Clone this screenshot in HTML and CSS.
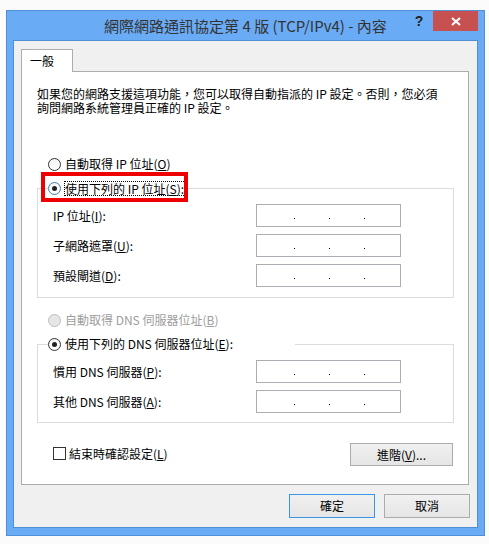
FILE: index.html
```html
<!DOCTYPE html>
<html lang="zh-Hant">
<head>
<meta charset="utf-8">
<title>網際網路通訊協定第 4 版 (TCP/IPv4) - 內容</title>
<link rel="stylesheet" href="styles.css">
</head>
<body>
<div class="window">
  <div class="titlebar">
    <div class="tb-side"></div>
    <div class="title">網際網路通訊協定第 4 版 (TCP/IPv4) - 內容</div>
    <div class="tb-side tb-btns">
      <div class="help">?</div>
      <div class="close"><svg width="10" height="9" viewBox="0 0 10 9"><path d="M1 1 L9 8 M9 1 L1 8" stroke="#fff" stroke-width="2" fill="none"/></svg></div>
    </div>
  </div>
  <div class="client">
    <div class="tabs"><div class="tab">一般</div></div>
    <div class="panel">
      <p class="desc">如果您的網路支援這項功能，您可以取得自動指派的 IP 設定。否則，您必須<br>詢問網路系統管理員正確的 IP 設定。</p>

      <div class="radio row-radio"><span class="circle"></span><span class="rtext">自動取得 IP 位址(<u>O</u>)</span></div>

      <div class="group">
        <div class="ghead">
          <span class="gcorner"></span>
          <div class="radio checked focused glabel-ip"><span class="circle"></span><span class="rtext focus">使用下列的 IP 位址(<u>S</u>):</span></div>
          <span class="gline"></span>
        </div>
        <div class="gbody">
          <span class="flabel">IP 位址(<u>I</u>):</span><span class="ipbox"><i></i><i></i><i></i></span>
          <span class="flabel">子網路遮罩(<u>U</u>):</span><span class="ipbox"><i></i><i></i><i></i></span>
          <span class="flabel">預設閘道(<u>D</u>):</span><span class="ipbox"><i></i><i></i><i></i></span>
        </div>
      </div>

      <div class="radio row-radio disabled row-dns-auto"><span class="circle"></span><span class="rtext">自動取得 DNS 伺服器位址(<u>B</u>)</span></div>

      <div class="group group-dns">
        <div class="ghead">
          <span class="gcorner"></span>
          <div class="radio checked glabel-dns"><span class="circle"></span><span class="rtext">使用下列的 DNS 伺服器位址(<u>E</u>):</span></div>
          <span class="gline"></span>
        </div>
        <div class="gbody">
          <span class="flabel">慣用 DNS 伺服器(<u>P</u>):</span><span class="ipbox"><i></i><i></i><i></i></span>
          <span class="flabel">其他 DNS 伺服器(<u>A</u>):</span><span class="ipbox"><i></i><i></i><i></i></span>
        </div>
      </div>

      <div class="footer">
        <div class="check"><span class="box"></span><span class="ctext">結束時確認設定(<u>L</u>)</span></div>
        <button class="btn btn-adv">進階(<u>V</u>)...</button>
      </div>
    </div>
    <div class="dlg-btns">
      <button class="btn btn-dlg default">確定</button>
      <button class="btn btn-dlg">取消</button>
    </div>
  </div>
</div>
</body>
</html>
```
FILE: styles.css
```css
* { box-sizing: border-box; }

html, body {
  margin: 0;
  padding: 0;
  background: #fbfbfb;
}

body {
  font-family: "Noto Sans CJK TC", "Noto Sans", sans-serif;
  font-size: 12px;
  color: #000;
  padding: 10px 0 0 6px;
}

.window {
  width: 479px;
  height: 526px;
  border: 1px solid #4f8fd6;
  background: #6aabf5;
  padding: 0 6px 7px 6px;
  display: flex;
  flex-direction: column;
}

/* title bar */
.titlebar {
  height: 29px;
  display: grid;
  grid-template-columns: 1fr auto 1fr;
  align-items: center;
}

.title {
  font-size: 15px;
  line-height: 20px;
  color: #333;
  white-space: nowrap;
}

.tb-btns {
  align-self: start;
  display: flex;
  justify-content: flex-end;
}

.help {
  width: 28px;
  height: 20px;
  text-align: center;
  font-family: "Liberation Sans", sans-serif;
  font-weight: bold;
  font-size: 14px;
  line-height: 20px;
  color: #222;
}

.close {
  width: 45px;
  height: 20px;
  background: #c75050;
  display: flex;
  align-items: center;
  justify-content: center;
}

/* client area */
.client {
  height: 488px;
  border: 1px solid #4f8fd6;
  background: #f0f0f0;
  padding: 8px 8px 0 7px;
  display: flex;
  flex-direction: column;
}

.tabs {
  height: 22px;
  display: flex;
  position: relative;
  z-index: 1;
}

.tab {
  width: 52px;
  height: 23px;
  background: #fff;
  border: 1px solid #adadad;
  border-bottom: none;
  padding-left: 8px;
  line-height: 21px;
}

.panel {
  height: 414px;
  background: #fff;
  border: 1px solid #adadad;
  padding: 0 14px 0 15px;
}

.desc {
  margin: 15px 0 0;
  line-height: 14px;
  white-space: nowrap;
}

/* radios */
.radio {
  display: flex;
  align-items: center;
  height: 24px;
  white-space: nowrap;
}

.row-radio {
  margin-left: 11px;
}

.desc + .row-radio {
  margin-top: 37px;
}

.row-dns-auto {
  margin-top: 10px;
}

.circle {
  width: 13px;
  height: 13px;
  border-radius: 50%;
  border: 1px solid #333;
  background: linear-gradient(#f4f4f4, #fff);
  margin-right: 4px;
  flex: none;
  display: flex;
  align-items: center;
  justify-content: center;
}

.checked .circle::after {
  content: "";
  width: 5px;
  height: 5px;
  border-radius: 50%;
  background: #222;
}

.focused .circle {
  border-color: #3c7fb1;
}

.disabled .circle {
  border-color: #bcbcbc;
  background: #e6e6e6;
}

.disabled .rtext {
  color: #9d9d9d;
}

.rtext {
  line-height: 14px;
}

.rtext.focus {
  line-height: 13px;
  border: 1px dotted #000;
  padding: 0 1px 0 0;
  margin-left: -1px;
}

/* group boxes */
.group {
  margin-right: 0;
}

.ghead {
  display: flex;
  height: 24px;
}

.gcorner {
  width: 11px;
  height: 12px;
  align-self: flex-end;
  border-top: 1px solid #dcdcdc;
  border-left: 1px solid #dcdcdc;
}

.gline {
  flex: 1;
  height: 12px;
  align-self: flex-end;
  border-top: 1px solid #dcdcdc;
  border-right: 1px solid #dcdcdc;
}

.glabel-ip {
  width: 138px;
  position: relative;
}

.glabel-ip::after {
  content: "";
  position: absolute;
  top: -4px;
  bottom: -2px;
  left: -7px;
  right: -2px;
  border: 4px solid #ee0000;
}

.glabel-dns {
  width: 247px;
}

.gbody {
  border: 1px solid #dcdcdc;
  border-top: none;
  padding: 4px 0 10px 15px;
  display: grid;
  grid-template-columns: 203px 145px;
  row-gap: 7px;
  align-items: center;
}

.group-dns .gbody {
  padding-bottom: 9px;
}

.flabel {
  line-height: 14px;
  white-space: nowrap;
}

.ipbox {
  height: 23px;
  border: 1px solid #abadb3;
  background: #fff;
  display: flex;
  align-items: flex-start;
  gap: 34px;
  padding: 13px 0 0 37px;
}

.ipbox i {
  display: block;
  width: 1px;
  height: 1px;
  background: #000;
}

/* footer */
.footer {
  margin-top: 20px;
  margin-left: 16px;
  margin-right: 1px;
  display: flex;
  justify-content: space-between;
  align-items: flex-start;
}

.check {
  display: flex;
  align-items: center;
  margin-top: 3px;
  height: 15px;
}

.box {
  width: 13px;
  height: 13px;
  border: 1px solid #333;
  background: #fff;
  margin-right: 3px;
}

.ctext {
  line-height: 14px;
}

.btn {
  font-family: "Noto Sans CJK TC", "Noto Sans", sans-serif;
  font-size: 12px;
  color: #000;
  border: 1px solid #acacac;
  background: linear-gradient(#f0f0f0, #e5e5e5);
  padding: 0;
  margin: 0;
  line-height: 14px;
}

.btn-adv {
  width: 103px;
  height: 23px;
}

.dlg-btns {
  margin-top: 9px;
  display: flex;
  justify-content: flex-end;
  gap: 9px;
  margin-right: -1px;
}

.btn-dlg {
  width: 86px;
  height: 24px;
}

.btn.default {
  border-color: #3c96e8;
}
```
